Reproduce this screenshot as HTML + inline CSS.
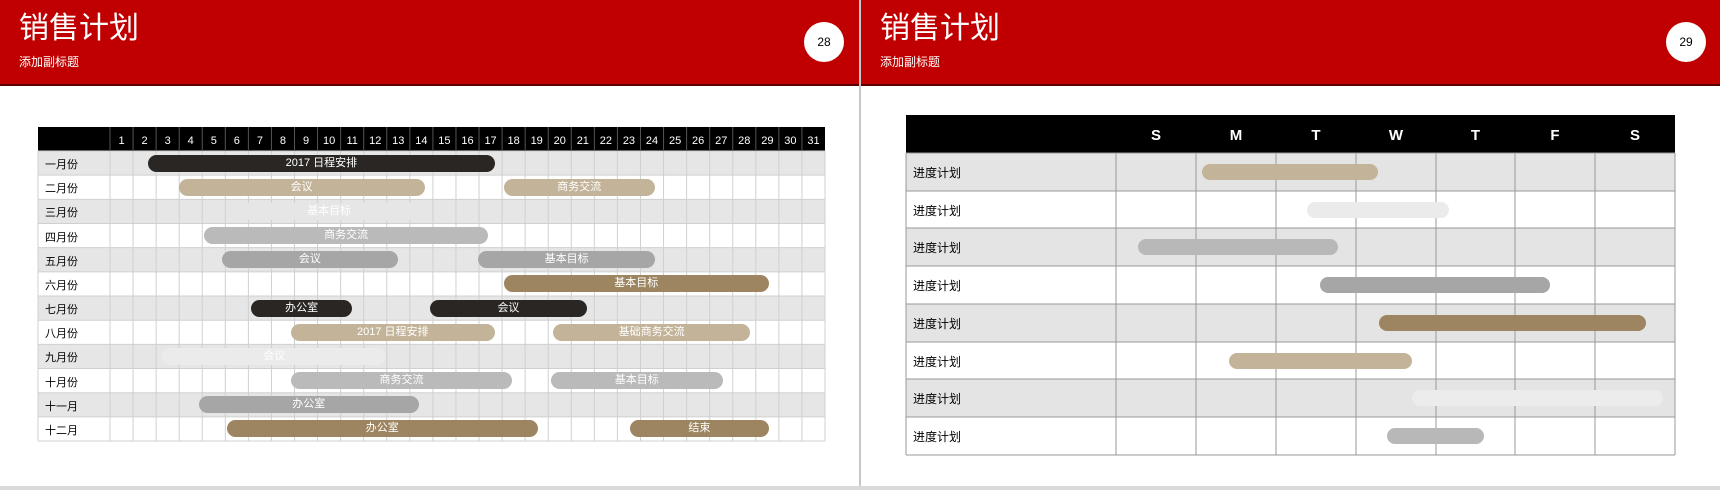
<!DOCTYPE html>
<html><head><meta charset="utf-8"><style>
*{margin:0;padding:0;box-sizing:border-box}
body{width:1720px;height:490px;background:#fff;position:relative;overflow:hidden;font-family:"Liberation Sans","Noto Sans CJK SC",sans-serif}
.abs{position:absolute}
.hdr{position:absolute;top:0;height:86px;background:#c00000;border-bottom:2px solid #5a0000}
.t{position:absolute;left:19px;top:11px;color:#fff;font-size:30px;line-height:36px}
.st{position:absolute;left:19px;top:53px;color:#fff;font-size:12px}
.c{position:absolute;top:22px;width:40px;height:40px;border-radius:50%;background:#fff;color:#000;font-size:12px;text-align:center;line-height:40px}
.bar{position:absolute;border-radius:9px;color:#fff;font-size:11px;text-align:center;line-height:17px;height:17px}
.lbl{position:absolute;font-size:11px;color:#000}
</style></head><body>
<!-- left slide -->
<div class="hdr" style="left:0;width:859px"><div class="t">销售计划</div><div class="st">添加副标题</div><div class="c" style="left:804px">28</div></div>
<div class="abs" style="left:859px;top:0;width:2px;height:490px;background:#c8c8c8"></div>
<div class="abs" style="left:0;top:486px;width:1720px;height:4px;background:#d9d9d9"></div>
<svg class="abs" style="left:0;top:0" width="859" height="486">
<rect x="38" y="127" width="787" height="24" fill="#000"/>
<g id="rows"></g>
</svg>
<div id="L"></div>
<!-- right slide -->
<div class="hdr" style="left:861px;width:859px"><div class="t">销售计划</div><div class="st">添加副标题</div><div class="c" style="left:805px">29</div></div>
<div id="R"></div>
<script>
var L=document.getElementById('L'),h='';
var x0=38,xl=110,cw=(825-110)/31,y0=151,rh=24.17;
var s='<svg class="abs" style="left:0;top:0" width="859" height="486">';
s+='<rect x="38" y="127" width="787" height="24" fill="#000"/>';
for(var i=0;i<12;i++){s+='<rect x="38" y="'+(y0+i*rh)+'" width="787" height="'+rh+'" fill="'+(i%2==0?'#e6e6e6':'#fff')+'"/>';}
for(var d=0;d<=31;d++){var x=xl+d*cw;s+='<line x1="'+x+'" y1="151" x2="'+x+'" y2="441" stroke="#d0d0d0" stroke-width="1"/>';}
for(var i=0;i<=12;i++){var y=y0+i*rh;s+='<line x1="38" y1="'+y+'" x2="825" y2="'+y+'" stroke="#d0d0d0"/>';}
s+='<line x1="38" y1="151" x2="38" y2="441" stroke="#d0d0d0"/><line x1="825" y1="151" x2="825" y2="441" stroke="#d0d0d0"/>';
for(var d=1;d<=31;d++){var x=xl+(d-1)*cw;s+='<line x1="'+x+'" y1="127" x2="'+x+'" y2="151" stroke="#555"/><text x="'+(x+cw/2)+'" y="144" fill="#fff" font-size="11" text-anchor="middle" font-family="Liberation Sans">'+d+'</text>';}
s+='</svg>';h+=s;
var m=['一月份','二月份','三月份','四月份','五月份','六月份','七月份','八月份','九月份','十月份','十一月','十二月'];
for(var i=0;i<12;i++)h+='<div class="lbl" style="left:45px;top:'+(y0+i*rh+5)+'px">'+m[i]+'</div>';
var k=1.097,D='#2a2624',T='#c3b499',G='#bababa',G2='#a6a6a6',B='#9c8560',W='#ebebeb';
var bars=[[0,135,451,D,'2017 日程安排'],[1,163,387,T,'会议'],[1,459,597,T,'商务交流'],[2,210,390,'#e6e6e6','基本目标'],[3,186,445,G,'商务交流'],[4,202,363,G2,'会议'],[4,436,597,G2,'基本目标'],[5,459,701,B,'基本目标'],[6,229,321,D,'办公室'],[6,392,535,D,'会议'],[7,265,451,T,'2017 日程安排'],[7,504,684,T,'基础商务交流'],[8,148,352,W,'会议'],[9,265,467,G,'商务交流'],[9,502,659,G,'基本目标'],[10,181,382,G2,'办公室'],[11,207,490,B,'办公室'],[11,574,701,B,'结束']];
bars.forEach(function(b){var a=b[1]*k,e=b[2]*k;h+='<div class="bar" style="left:'+a+'px;width:'+(e-a)+'px;top:'+(y0+b[0]*rh+3.5)+'px;background:'+b[3]+'">'+b[4]+'</div>';});
L.innerHTML=h;
// right
var R=document.getElementById('R'),r='';
var ry=[153,191,228,266,304,342,379,417,455],cx=[1116,1196,1276,1356,1436,1515,1595,1675];
s='<svg class="abs" style="left:0;top:0" width="1720" height="486">';
s+='<rect x="906" y="115" width="769" height="38" fill="#000"/>';
for(var i=0;i<8;i++)s+='<rect x="906" y="'+ry[i]+'" width="769" height="'+(ry[i+1]-ry[i])+'" fill="'+(i%2==0?'#e4e4e4':'#fff')+'"/>';
for(var i=0;i<9;i++)s+='<line x1="906" y1="'+ry[i]+'" x2="1675" y2="'+ry[i]+'" stroke="#999"/>';
s+='<line x1="906" y1="153" x2="906" y2="455" stroke="#999"/>';
for(var j=0;j<8;j++)s+='<line x1="'+cx[j]+'" y1="153" x2="'+cx[j]+'" y2="455" stroke="#999"/>';
var dl='SMTWTFS';for(var j=0;j<7;j++)s+='<text x="'+((cx[j]+cx[j+1])/2)+'" y="140" fill="#fff" font-size="15" font-weight="bold" text-anchor="middle" font-family="Liberation Sans">'+dl[j]+'</text>';
s+='</svg>';r+=s;
for(var i=0;i<8;i++)r+='<div class="lbl" style="left:913px;font-size:12px;top:'+(ry[i]+11)+'px">进度计划</div>';
var rb=[[1202,1378,T],[1307,1449,W],[1138,1338,'#b8b8b8'],[1320,1550,G2],[1379,1646,B],[1229,1412,T],[1412,1663,'#ececec'],[1387,1484,'#b8b8b8']];
rb.forEach(function(b,i){r+='<div class="bar" style="left:'+b[0]+'px;width:'+(b[1]-b[0])+'px;top:'+((ry[i]+ry[i+1])/2-8)+'px;height:16px;background:'+b[2]+'"></div>';});
R.innerHTML=r;
</script>
</body></html>
